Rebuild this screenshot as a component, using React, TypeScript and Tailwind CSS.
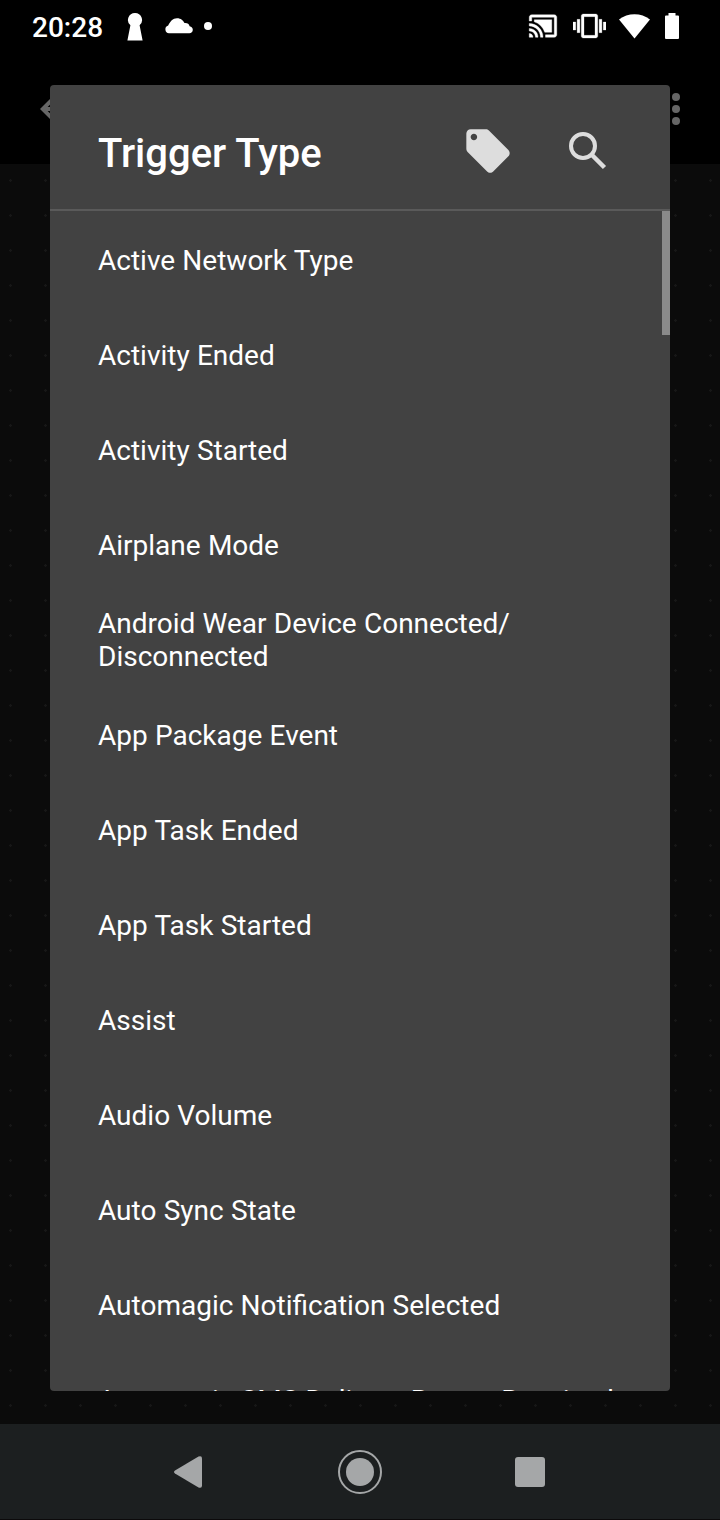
import React from 'react';

const triggers = [
  'Active Network Type',
  'Activity Ended',
  'Activity Started',
  'Airplane Mode',
  'Android Wear Device Connected/\nDisconnected',
  'App Package Event',
  'App Task Ended',
  'App Task Started',
  'Assist',
  'Audio Volume',
  'Auto Sync State',
  'Automagic Notification Selected',
  'Automagic SMS Delivery Report Received',
];

const StatusBar = () => {
  return (
    <div className="flex flex-row h-[52px] justify-between items-center pl-8 pr-[41px] text-white">
      <div className="flex flex-row items-center">
        <span className="w-[93px] text-[28px] leading-[32px] font-medium mt-[3px]">
          20:28
        </span>
        <svg
          width="20"
          height="28"
          viewBox="0 0 20 28"
          fill="currentColor"
          className="mt-[2px]"
        >
          <path d="M10 0a7 7 0 0 0-4.6 12.3L2.4 27.4h15.2l-3-15.1A7 7 0 0 0 10 0z" />
        </svg>
        <svg
          width="28"
          height="16"
          viewBox="0 0 28 16"
          fill="currentColor"
          className="ml-5"
        >
          <path d="M4 15.3A4 4 0 0 1 3.2 7.5C5.2 3.3 7.8.2 12 .2c4 0 6.3 2.2 7.5 4.9C22.3 4.8 24 6 24.6 8.3c2 .3 3.2 1.8 3.2 3.5 0 2-1.5 3.5-3.4 3.5z" />
        </svg>
        <span className="w-2 h-2 rounded-full bg-white ml-[11px]" />
      </div>
      <div className="flex flex-row items-center">
        <svg
          width="30"
          height="30"
          viewBox="0 0 24 24"
          fill="currentColor"
        >
          <path
            d="M1 18v3h3c0-1.66-1.34-3-3-3zm0-4v2c2.76 0 5 2.24 5 5h2c0-3.87-3.13-7-7-7zm18-7H5v1.63c3.96 1.28 7.09 4.41 8.37 8.37H19V7zM1 10v2c4.97 0 9 4.03 9 9h2c0-6.08-4.93-11-11-11zm20-7H3c-1.1 0-2 .9-2 2v3h2V5h18v14h-7v2h7c1.1 0 2-.9 2-2V5c0-1.1-.9-2-2-2z"
            stroke="currentColor"
            strokeWidth="0.3"
          />
        </svg>
        <svg
          width="33"
          height="32"
          viewBox="0 0 24 24"
          preserveAspectRatio="none"
          fill="currentColor"
          className="ml-[15px]"
        >
          <path
            d="M0 15h2V9H0v6zm3 2h2V7H3v10zm19-8v6h2V9h-2zm-3 8h2V7h-2v10zM16.5 3h-9C6.67 3 6 3.67 6 4.5v15c0 .83.67 1.5 1.5 1.5h9c.83 0 1.5-.67 1.5-1.5v-15c0-.83-.67-1.5-1.5-1.5zM16 19H8V5h8v14z"
            stroke="currentColor"
            strokeWidth="0.2"
          />
        </svg>
        <svg
          width="31"
          height="25"
          viewBox="0 0 31 25"
          fill="currentColor"
          className="ml-[13px]"
        >
          <path d="M15.5 24.5L0 5.5C4.5 2 9.8.3 15.5.3S26.5 2 31 5.5z" />
        </svg>
        <svg
          width="14"
          height="26"
          viewBox="0 0 14 26"
          fill="currentColor"
          className="ml-[15px]"
        >
          <path d="M3.5 0h7v2.5H13a1 1 0 0 1 1 1V25a1 1 0 0 1-1 1H1a1 1 0 0 1-1-1V3.5a1 1 0 0 1 1-1h2.5z" />
        </svg>
      </div>
    </div>
  );
};

const Toolbar = () => {
  return (
    <div className="flex flex-row h-[112px] justify-between items-center pt-[2px] pl-8 pr-10 text-[#666666]">
      <svg width="48" height="48" viewBox="0 0 24 24" fill="currentColor">
        <path d="M20 11H7.83l5.59-5.59L12 4l-8 8 8 8 1.41-1.41L7.83 13H20v-2z" />
      </svg>
      <div className="flex flex-col gap-1">
        <span className="w-2 h-2 rounded-full bg-current" />
        <span className="w-2 h-2 rounded-full bg-current" />
        <span className="w-2 h-2 rounded-full bg-current" />
      </div>
    </div>
  );
};

const NavigationBar = () => {
  return (
    <div className="flex flex-row h-24 shrink-0 items-center bg-[#1c1f20] text-[#a5a7a8] border-b border-[#0c0a0b]">
      <svg
        width="28"
        height="32"
        viewBox="0 0 28 32"
        fill="currentColor"
        className="ml-[174px]"
      >
        <path d="M1 14.4L24.5.5Q28-.8 28 2.5v27Q28 32.8 24.5 31.5L1 17.6Q-1 16 1 14.4z" />
      </svg>
      <div className="flex w-11 h-11 items-center justify-center rounded-full border-2 border-current ml-[136px]">
        <span className="w-7 h-7 rounded-full bg-current" />
      </div>
      <span className="w-[30px] h-[30px] rounded-[3px] bg-current ml-[133px]" />
    </div>
  );
};

const TriggerDialog = () => {
  return (
    <div className="relative flex flex-col w-[620px] h-[1306px] rounded bg-[#424242] overflow-hidden">
      <div className="flex flex-row h-[126px] shrink-0 items-center pl-12 border-b-2 border-[#5a5a5a] text-[#dddddd]">
        <h1 className="w-[364px] text-[40px] leading-[48px] font-medium text-white mt-[14px]">
          Trigger Type
        </h1>
        <svg
          width="52"
          height="52"
          viewBox="0 0 24 24"
          fill="currentColor"
          className="mt-[7px]"
        >
          <path d="M21.41 11.58l-9-9C12.05 2.22 11.55 2 11 2H4c-1.1 0-2 .9-2 2v7c0 .55.22 1.05.59 1.42l9 9c.36.36.86.58 1.41.58.55 0 1.05-.22 1.41-.59l7-7c.37-.36.59-.86.59-1.41 0-.55-.23-1.06-.59-1.42zM5.5 7C4.67 7 4 6.33 4 5.5S4.67 4 5.5 4 7 4.67 7 5.5 6.33 7 5.5 7z" />
        </svg>
        <svg
          width="38"
          height="38"
          viewBox="0 0 38 38"
          fill="none"
          stroke="currentColor"
          className="ml-[55px] mt-[8px]"
        >
          <circle cx="14" cy="14" r="12" strokeWidth="4" />
          <path d="M23.5 23.5l12 12" strokeWidth="4.5" />
        </svg>
      </div>
      <ul className="flex flex-col pt-[2px]">
        {triggers.map((name) => (
          <li
            key={name}
            className="flex h-[95px] shrink-0 items-center pl-12 text-[28px] leading-[33px] text-white whitespace-pre [word-spacing:0.3px] odd:pb-px"
          >
            {name}
          </li>
        ))}
      </ul>
      {/* scroll thumb */}
      <div className="absolute right-0 top-[126px] w-2 h-[124px] bg-[#8a8a8a]" />
    </div>
  );
};

const App = () => {
  return (
    <div className="relative flex flex-col w-[720px] h-[1520px] overflow-hidden bg-black font-[Roboto,sans-serif]">
      <StatusBar />
      <Toolbar />
      <div className="grow bg-[#0b0b0b] bg-[radial-gradient(circle_at_10.5px_16.5px,#171717_1px,transparent_1.5px)] bg-[length:35px_35px]" />
      <NavigationBar />
      <div className="absolute inset-0 flex justify-center items-start pt-[85px]">
        <TriggerDialog />
      </div>
    </div>
  );
};

export default App;
